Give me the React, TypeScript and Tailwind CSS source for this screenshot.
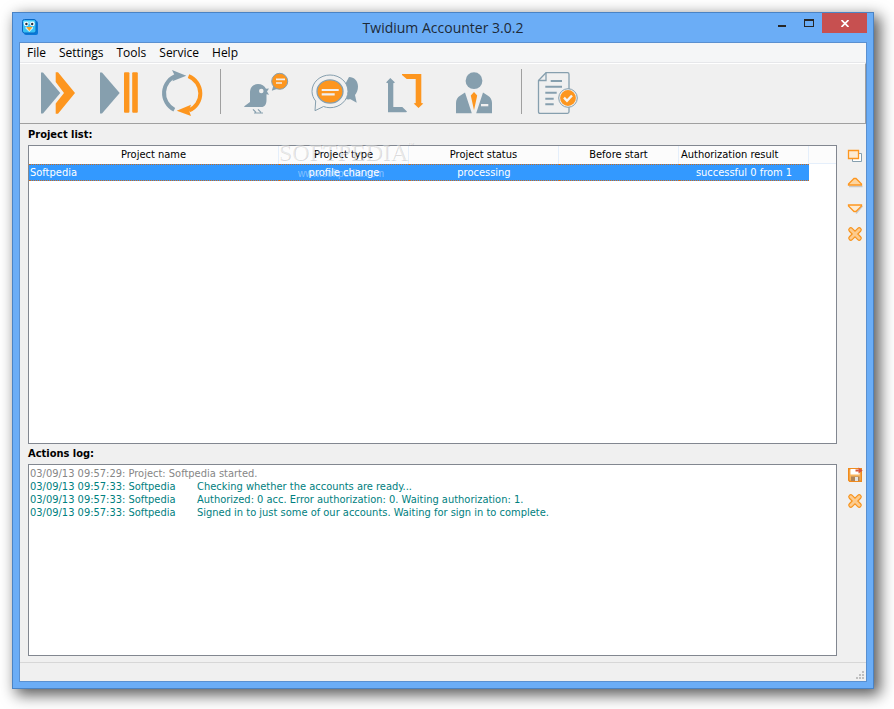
import type { ReactNode } from 'react';

const GRAY = '#869fae';
const ORANGE = '#fd961f';

function ToolButton({ label, children }: { label: string; children: ReactNode }) {
  return (
    <button type="button" aria-label={label} className="size-12 shrink-0">
      <svg viewBox="0 0 48 48" className="size-12" fill="none">
        {children}
      </svg>
    </button>
  );
}

function SideButton({ label, children }: { label: string; children: ReactNode }) {
  return (
    <button type="button" aria-label={label} className="size-4 shrink-0">
      <svg viewBox="0 0 16 16" className="size-4" fill="none">
        {children}
      </svg>
    </button>
  );
}

function Separator() {
  return <div className="h-[45px] w-px shrink-0 bg-[#a0a0a0]" />;
}

function AppIcon() {
  return (
    <svg viewBox="0 0 16 16" className="size-4" aria-hidden>
      <rect x="2" y="2" width="14" height="14" rx="2" fill="#0a78d8" />
      <rect x="0.5" y="0.5" width="13.5" height="13.5" rx="2" fill="#38c0f4" stroke="#0868c4" />
      <path d="M1.5 2h11v3h-11z" fill="#7fe0fb" />
      <circle cx="4.2" cy="5" r="2.3" fill="#fff" />
      <circle cx="10.4" cy="5" r="2.3" fill="#fff" />
      <circle cx="4.4" cy="5" r="1.2" fill="#20303c" />
      <circle cx="10.2" cy="5" r="1.2" fill="#20303c" />
      <path d="M3.5 8h7.5v1.5L7.3 13 3.5 9.5z" fill="#c5effc" />
      <path d="M4.3 8h6L7.3 12z" fill="#f7a321" />
    </svg>
  );
}

function DeleteIcon() {
  return (
    <>
      <path d="M3.8 3.8l8.4 8.4M12.2 3.8l-8.4 8.4" stroke="#f7941e" strokeWidth="5.2" strokeLinecap="round" />
      <path d="M3.8 3.8l8.4 8.4M12.2 3.8l-8.4 8.4" stroke="#fdcb8d" strokeWidth="2.8" strokeLinecap="round" />
    </>
  );
}

function TitleBar() {
  return (
    <header className="grid h-[29px] grid-cols-[1fr_auto_1fr]">
      <div className="pt-1.5 pl-[3px]">
        <AppIcon />
      </div>
      <h1 className="text-sm leading-[29px] text-[#1d2a38] font-['Open_Sans','Noto_Sans',sans-serif]">
        Twidium Accounter 3.0.2
      </h1>
      <div className="flex items-start justify-end">
        <button type="button" aria-label="Minimize" className="flex h-5 w-[27px] justify-center pt-3">
          <span className="h-0.5 w-2 bg-[#262626]" />
        </button>
        <button type="button" aria-label="Maximize" className="flex h-5 w-[27px] justify-center pt-1.5">
          <span className="h-2 w-2.5 border border-t-2 border-[#262626]" />
        </button>
        <button type="button" aria-label="Close" className="flex h-5 w-[45px] items-center justify-center bg-[#c75050]">
          <svg viewBox="0 0 8 7" className="h-[7px] w-2" stroke="#fff" strokeWidth="1.7">
            <path d="M0.5 0l7 7M7.5 0l-7 7" />
          </svg>
        </button>
      </div>
    </header>
  );
}

const menus = ['File', 'Settings', 'Tools', 'Service', 'Help'];

function MenuBar() {
  return (
    <nav className="flex h-5 gap-[13px] border-b border-[#e6e7ea] bg-[#f5f6f7] pl-[7px] text-xs leading-[19px] font-['Open_Sans','Noto_Sans',sans-serif]">
      {menus.map((menu) => (
        <button key={menu} type="button">
          {menu}
        </button>
      ))}
    </nav>
  );
}

function Toolbar() {
  return (
    <div
      role="toolbar"
      className="flex h-[61px] items-start border-t border-r border-b border-t-white border-r-[#a0a0a0] border-b-[#a0a0a0] pt-[5px] pl-3.5"
    >
      <div className="flex gap-3.5 pr-3.5">
        <ToolButton label="Start all">
          <path d="M7 3.5h2L26.3 24 9 44.5H7z" fill={GRAY} />
          <path d="M21.7 3.3H24L41 24 24 44.7h-2.3V34.5L30 24l-8.3-11z" fill={ORANGE} />
        </ToolButton>
        <ToolButton label="Pause all">
          <path d="M4 3.5h2L23.7 24 6 44.5H4z" fill={GRAY} />
          <rect x="28" y="3.3" width="5.4" height="40.5" rx="1" fill={ORANGE} />
          <rect x="36.2" y="3.3" width="5.6" height="40.5" rx="1" fill={ORANGE} />
        </ToolButton>
        <ToolButton label="Restart">
          <path d="M16.3 40.7A18.5 18.5 0 0 1 19 6.5" stroke={GRAY} strokeWidth="4" />
          <path d="M14 1l14.3 5.7L14.3 12.2 17 7z" fill={GRAY} />
          <path d="M30.5 7.2A18.5 18.5 0 0 1 31 41.5" stroke={ORANGE} strokeWidth="4" />
          <path d="M18.7 41.7L33 35.7l-2 5.8 2 5.5z" fill={ORANGE} />
        </ToolButton>
      </div>
      <Separator />
      <div className="flex gap-[21px] pr-6 pl-[21px]">
        <ToolButton label="Tweet">
          <path
            d="M2.3 38v-.7L8 33v-9.5C8 18 11.5 15 16 15c3.5 0 6.500 1.500 8 4.800l3-.4-2 3 2 3.300-2.500-.4V31c0 4.500-2 7-5 7z"
            fill={GRAY}
          />
          <circle cx="19.3" cy="22" r="2.300" fill="#f0f0f0" />
          <path d="M11 40.3l3 3M16 40.3l3 3M12 44h9" stroke={GRAY} strokeWidth="1.2" />
          <path d="M29.8 21.7l2-6.5 4.5 4.3z" fill={GRAY} />
          <circle cx="37.7" cy="12.3" r="8" fill={ORANGE} stroke={GRAY} />
          <path d="M34 10.3h9M34 14h6" stroke="#f0f0f0" strokeWidth="1.7" />
        </ToolButton>
        <ToolButton label="Direct messages">
          <path d="M38 8c5.3 0 9 4 9 9.5 0 4-1.5 6.5-3 8.5l1.7 7.8-6.2-3.5c-5 .7-9-1-11-4.5z" fill={GRAY} />
          <path
            d="M4.7 32C2.5 29.5 1 26 1 22.3 1 13.3 9 6 19 6s18 7.3 18 16.3-8 16.4-18 16.400c-2.500 0-4.500-.5-6.500-1.200L4 41.700z"
            fill="#f0f0f0"
            stroke={GRAY}
          />
          <ellipse cx="19" cy="22.5" rx="13" ry="11.6" fill={ORANGE} stroke={GRAY} strokeWidth="1.3" />
          <path d="M10.700 21h17M10.700 25.300h13" stroke="#f0f0f0" strokeWidth="2.2" />
        </ToolButton>
        <ToolButton label="Retweet">
          <path d="M10.3 9l4.700 4.600-1.700.7V38h9l4.700 4.500-.8.700H8V14.300l-2-.7z" fill={GRAY} />
          <path d="M22 5h19.3v29l2 .5-4.800 4.500-4.800-4.500 2-.5V10h-9L22 6z" fill={ORANGE} />
        </ToolButton>
        <ToolButton label="Accounts">
          <circle cx="25" cy="11.7" r="8.4" fill={GRAY} />
          <path d="M7 44.3V34c0-3.5 1.5-5.8 4-7.3l5-3.2 6.8 20.8z" fill={GRAY} />
          <path d="M43 44.3V34c0-3.5-1.5-5.8-4-7.3l-5-3.2-6.8 20.8z" fill={GRAY} />
          <path d="M25 23l3.2 3.5L25 41.3l-3.2-14.8z" fill={ORANGE} />
          <path d="M32 35h7.3v2.3H32z" fill="#f0f0f0" />
        </ToolButton>
      </div>
      <Separator />
      <div className="flex pl-3">
        <ToolButton label="Reports">
          <path
            d="M12 3.7h21.5c1 0 1.5.6 1.5 1.5v37.6c0 1-.5 1.5-1.5 1.5H6c-1 0-1.5-.5-1.5-1.5V11.500z"
            stroke={GRAY}
            strokeWidth="1.3"
          />
          <path d="M12 3.7v7.8H4.5" stroke={GRAY} strokeWidth="1.3" />
          <path
            d="M16.7 12H28M11.3 17.7H28M11.3 23.7h11.4M11.3 29.7h8.4M11.3 35.3h8.4"
            stroke={GRAY}
            strokeWidth="2"
          />
          <circle cx="34" cy="29" r="9.3" fill="#f0f0f0" stroke={GRAY} />
          <circle cx="34" cy="29" r="7.9" fill={ORANGE} />
          <path d="M30 28.7l3 3.100 5-5.300" stroke="#f5f5f5" strokeWidth="2.4" />
        </ToolButton>
      </div>
    </div>
  );
}

function Watermark() {
  return (
    <div aria-hidden className="pointer-events-none absolute -top-1.5 left-[249px] w-[140px] select-none">
      <div className="flex text-2xl leading-6 text-white/40 [text-shadow:1px_1px_0_rgb(0_0_0/0.14)] font-['Liberation_Serif',serif]">
        SOFTPEDIA<span className="text-[6px] leading-2">™</span>
      </div>
      <div className="pt-0.5 pl-5 text-[10px] leading-4 text-white/40 font-['Liberation_Sans',sans-serif]">
        www.softpedia.com
      </div>
    </div>
  );
}

function ProjectTable() {
  return (
    <div className="relative h-[299px] min-w-0 flex-1 border border-[#828790] bg-white">
      <table className="w-full table-fixed border-separate border-spacing-0 text-center">
        <colgroup>
          <col className="w-[250px]" />
          <col className="w-[130px]" />
          <col className="w-[150px]" />
          <col className="w-[120px]" />
          <col className="w-[130px]" />
          <col />
        </colgroup>
        <thead>
          <tr className="h-[18px] bg-[#fcfcfc] leading-[18px] *:border-[#e5effb] *:p-0 *:font-normal [&>th]:border-r">
            <th scope="col">Project name</th>
            <th scope="col">Project type</th>
            <th scope="col">Project status</th>
            <th scope="col">Before start</th>
            <th scope="col" className="text-left">
              <span className="pl-0.5">Authorization result</span>
            </th>
            <td className="border-b" />
          </tr>
        </thead>
        <tbody>
          <tr className="h-[17px] leading-[15px] text-white *:p-0 [&>td:not(:last-child)]:border-y [&>td:not(:last-child)]:border-dotted [&>td:not(:last-child)]:border-[#cc6a1a] [&>td:not(:last-child)]:bg-[#3399ff]">
            <td className="text-left">
              <span className="pl-px">Softpedia</span>
            </td>
            <td>profile change</td>
            <td>processing</td>
            <td />
            <td>successful 0 from 1</td>
            <td />
          </tr>
        </tbody>
      </table>
      <Watermark />
    </div>
  );
}

const log = [
  { time: '03/09/13 09:57:33:', project: 'Softpedia', text: 'Checking whether the accounts are ready...' },
  { time: '03/09/13 09:57:33:', project: 'Softpedia', text: 'Authorized: 0 acc. Error authorization: 0. Waiting authorization: 1.' },
  { time: '03/09/13 09:57:33:', project: 'Softpedia', text: 'Signed in to just some of our accounts. Waiting for sign in to complete.' },
];

function ActionsLog() {
  return (
    <div
      role="log"
      className="min-h-[120px] min-w-0 flex-1 border border-[#828790] bg-white pt-0.5 pl-px leading-[13px] text-[#008080]"
    >
      <p className="text-[#868686]">03/09/13 09:57:29: Project: Softpedia started.</p>
      {log.map((entry) => (
        <p key={entry.text} className="flex">
          <span className="w-[167px] shrink-0">
            {entry.time} {entry.project}
          </span>
          <span>{entry.text}</span>
        </p>
      ))}
    </div>
  );
}

export default function App() {
  return (
    <div className="flex min-h-screen bg-white pt-3 pr-5 pb-5 pl-3 text-black">
      <main className="flex min-w-0 flex-1 flex-col border border-[#4a83c4] bg-[#6badf6] px-1.5 pb-1.5 shadow-[5px_5px_14px_1px_rgb(0_0_0/0.65)]">
        <TitleBar />
        <div className="flex flex-1 flex-col border border-[#5a90d0] bg-[#f0f0f0] text-[11px] font-['DejaVu_Sans_Condensed','DejaVu_Sans',sans-serif]">
          <MenuBar />
          <Toolbar />
          <h2 className="pl-2 leading-[21px] font-bold">Project list:</h2>
          <section className="flex gap-2.5 pr-[3px] pl-2">
            <ProjectTable />
            <div className="flex flex-col gap-2.5 pt-[3px]">
              <SideButton label="Copy project">
                <path d="M5.5 5.5h9v8h-9z" fill="#fff" stroke={GRAY} />
                <path d="M1.5 2.5h10v8h-10z" fill="#fdebd3" stroke={ORANGE} strokeWidth="1.3" />
              </SideButton>
              <SideButton label="Move up">
                <path d="M2 12.5h13.5" stroke="#c8c8c8" strokeWidth="1.5" />
                <path d="M1.5 11v-1L7 4.500h2L14.500 10v1z" fill="#fdd5a0" stroke={ORANGE} strokeWidth="1.3" />
              </SideButton>
              <SideButton label="Move down">
                <path d="M9 13.5L15.500 6" stroke="#c8c8c8" strokeWidth="1.5" />
                <path d="M1.500 5v1L7 11.500h2L14.500 6V5z" fill="#fdebd3" stroke={ORANGE} strokeWidth="1.3" />
              </SideButton>
              <SideButton label="Delete project">
                <DeleteIcon />
              </SideButton>
            </div>
          </section>
          <h2 className="pl-2 leading-5 font-bold">Actions log:</h2>
          <section className="flex flex-1 gap-2.5 pr-[3px] pl-2">
            <ActionsLog />
            <div className="flex flex-col gap-2.5 pt-[3px]">
              <SideButton label="Save log">
                <path d="M1.7 1.7h12.600v12.600H2.700l-1-1z" fill="#f9b45c" stroke="#f08a1c" strokeWidth="1.4" />
                <path d="M3.5 2h9v5.500h-9z" fill="#fff" />
                <path d="M4 9.500h8.500V14H4z" fill="#b08458" />
                <path d="M8 10h3v4H8z" fill="#e4e4e4" />
                <path d="M8.500 3.500h3.300" stroke="#d8583a" strokeWidth="2" />
                <path d="M11.500 0.500L15.700 3.500l-4.200 3z" fill="#d8583a" />
              </SideButton>
              <SideButton label="Clear log">
                <DeleteIcon />
              </SideButton>
            </div>
          </section>
          <footer className="mt-1.5 flex h-[19px] items-end justify-end border-t border-[#d7d7d7] pr-0.5 pb-0.5">
            <svg viewBox="0 0 8 8" className="size-2" fill="#bfbfbf" aria-hidden>
              <path d="M6 0h2v2H6zM3 3h2v2H3zM6 3h2v2H6zM0 6h2v2H0zM3 6h2v2H3zM6 6h2v2H6z" />
            </svg>
          </footer>
        </div>
      </main>
    </div>
  );
}
